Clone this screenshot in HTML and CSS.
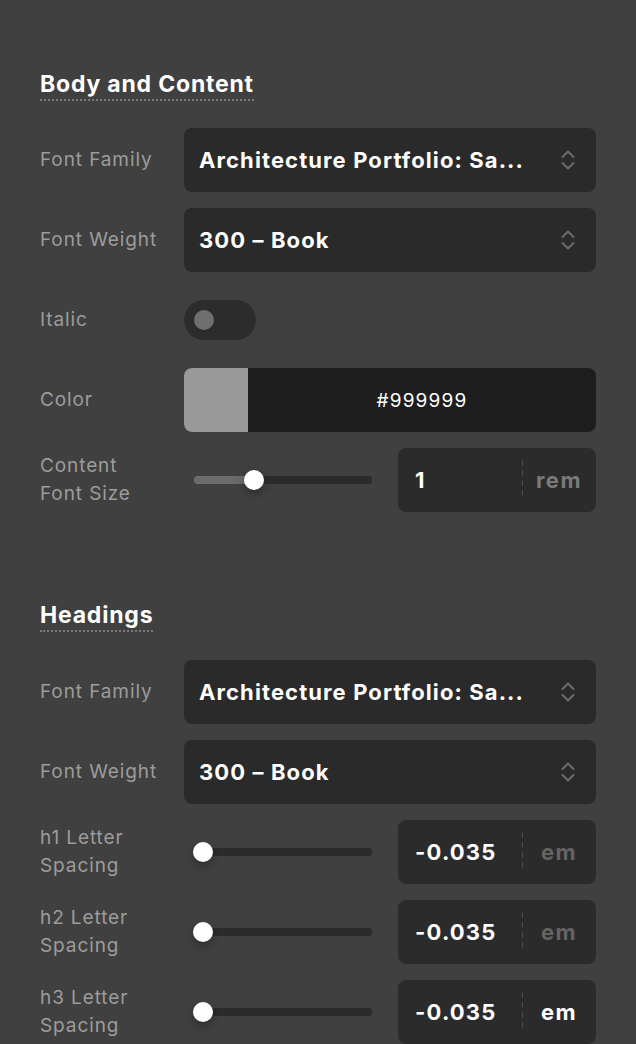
FILE: index.html
```html
<!DOCTYPE html>
<html>
<head>
<meta charset="utf-8">
<link rel="stylesheet" href="styles.css">
</head>
<body>
<div class="panel">
  <section class="section">
    <h2 class="section-title"><span>Body and Content</span></h2>
    <div class="rows">
      <div class="row">
        <div class="label">Font Family</div>
        <div class="select"><span class="select-text">Architecture Portfolio: Sa...</span>
          <svg class="chev" viewBox="0 0 16 22" width="16" height="22"><path d="M2.5 8 L8 2.5 L13.5 8 M2.5 14 L8 19.5 L13.5 14" fill="none" stroke="#6c6c6c" stroke-width="2" stroke-linecap="round" stroke-linejoin="round"/></svg>
        </div>
      </div>
      <div class="row">
        <div class="label">Font Weight</div>
        <div class="select"><span class="select-text">300 – Book</span>
          <svg class="chev" viewBox="0 0 16 22" width="16" height="22"><path d="M2.5 8 L8 2.5 L13.5 8 M2.5 14 L8 19.5 L13.5 14" fill="none" stroke="#6c6c6c" stroke-width="2" stroke-linecap="round" stroke-linejoin="round"/></svg>
        </div>
      </div>
      <div class="row">
        <div class="label">Italic</div>
        <div class="toggle-wrap"><div class="toggle"><div class="knob"></div></div></div>
      </div>
      <div class="row">
        <div class="label">Color</div>
        <div class="color-field"><div class="swatch"></div><div class="hex">#999999</div></div>
      </div>
      <div class="row">
        <div class="label">Content<br>Font Size</div>
        <div class="slider-field">
          <div class="slider">
            <div class="track"><div class="fill" style="width:60px"></div></div>
            <div class="thumb" style="left:50px"></div>
          </div>
          <div class="num">
            <div class="num-value">1</div>
            <div class="num-unit rem">rem</div>
          </div>
        </div>
      </div>
    </div>
  </section>

  <section class="section second">
    <h2 class="section-title"><span>Headings</span></h2>
    <div class="rows">
      <div class="row">
        <div class="label">Font Family</div>
        <div class="select"><span class="select-text">Architecture Portfolio: Sa...</span>
          <svg class="chev" viewBox="0 0 16 22" width="16" height="22"><path d="M2.5 8 L8 2.5 L13.5 8 M2.5 14 L8 19.5 L13.5 14" fill="none" stroke="#6c6c6c" stroke-width="2" stroke-linecap="round" stroke-linejoin="round"/></svg>
        </div>
      </div>
      <div class="row">
        <div class="label">Font Weight</div>
        <div class="select"><span class="select-text">300 – Book</span>
          <svg class="chev" viewBox="0 0 16 22" width="16" height="22"><path d="M2.5 8 L8 2.5 L13.5 8 M2.5 14 L8 19.5 L13.5 14" fill="none" stroke="#6c6c6c" stroke-width="2" stroke-linecap="round" stroke-linejoin="round"/></svg>
        </div>
      </div>
      <div class="row">
        <div class="label">h1 Letter<br>Spacing</div>
        <div class="slider-field">
          <div class="slider">
            <div class="track"><div class="fill" style="width:0px"></div></div>
            <div class="thumb" style="left:-1px"></div>
          </div>
          <div class="num">
            <div class="num-value">-0.035</div>
            <div class="num-unit em">em</div>
          </div>
        </div>
      </div>
      <div class="row">
        <div class="label">h2 Letter<br>Spacing</div>
        <div class="slider-field">
          <div class="slider">
            <div class="track"><div class="fill" style="width:0px"></div></div>
            <div class="thumb" style="left:-1px"></div>
          </div>
          <div class="num">
            <div class="num-value">-0.035</div>
            <div class="num-unit em">em</div>
          </div>
        </div>
      </div>
      <div class="row">
        <div class="label">h3 Letter<br>Spacing</div>
        <div class="slider-field">
          <div class="slider">
            <div class="track"><div class="fill" style="width:0px"></div></div>
            <div class="thumb" style="left:-1px"></div>
          </div>
          <div class="num">
            <div class="num-value">-0.035</div>
            <div class="num-unit em active">em</div>
          </div>
        </div>
      </div>
    </div>
  </section>
</div>
</body>
</html>
```

FILE: styles.css
```css
html, body {
  margin: 0;
  padding: 0;
  background: #404040;
}
body {
  font-family: Inter, "Noto Sans", "Liberation Sans", sans-serif;
  color: #fff;
  height: 1044px;
  overflow: hidden;
}
.panel {
  padding: 70px 40px 0 40px;
}
.section-title {
  margin: 0 0 27px 0;
  font-size: 23px;
  font-weight: 700;
  line-height: 28px;
  color: #fff;
}
.section-title span {
  display: inline-block;
  padding-bottom: 1px;
  border-bottom: 2px dotted #7a7a7a;
  letter-spacing: 0.8px;
}
.second {
  margin-top: 89px;
}
.second .section-title {
  margin-bottom: 28px;
}
.rows {
  display: flex;
  flex-direction: column;
  gap: 16px;
}
.row {
  display: grid;
  grid-template-columns: 144px 1fr;
  align-items: center;
  height: 64px;
}
.label {
  font-size: 19px;
  line-height: 28px;
  color: #9c9c9c;
  letter-spacing: 0.9px;
}
.select {
  height: 64px;
  background: #2a2a2a;
  border-radius: 8px;
  display: flex;
  align-items: center;
  padding: 0 20px 0 15px;
  box-sizing: border-box;
}
.select-text {
  flex: 1;
  font-size: 22px;
  font-weight: 700;
  letter-spacing: 1.1px;
  white-space: nowrap;
}
.chev {
  display: block;
}
.toggle-wrap {
  display: flex;
  align-items: center;
}
.toggle {
  width: 72px;
  height: 40px;
  border-radius: 20px;
  background: #2c2c2c;
  display: flex;
  align-items: center;
  padding-left: 10px;
  box-sizing: border-box;
}
.knob {
  width: 20px;
  height: 20px;
  border-radius: 50%;
  background: #6f6f6f;
}
.color-field {
  height: 64px;
  display: flex;
  background: #1e1e1e;
  border-radius: 8px;
  overflow: hidden;
}
.swatch {
  width: 64px;
  background: #999999;
}
.hex {
  flex: 1;
  display: flex;
  align-items: center;
  justify-content: center;
  font-size: 19px;
  letter-spacing: 1.2px;
}
.slider-field {
  display: flex;
  align-items: center;
  height: 64px;
}
.slider {
  position: relative;
  flex: 1;
  height: 20px;
  margin: 0 26px 0 10px;
}
.track {
  position: absolute;
  left: 0;
  right: 0;
  top: 6px;
  height: 8px;
  border-radius: 3px;
  background: #2b2b2b;
  overflow: hidden;
}
.fill {
  height: 100%;
  background: #6b6b6b;
}
.thumb {
  position: absolute;
  top: 0;
  width: 20px;
  height: 20px;
  border-radius: 50%;
  background: #fff;
  box-shadow: 0 4px 10px rgba(0,0,0,0.3);
}
.num {
  width: 198px;
  height: 64px;
  background: #2b2b2b;
  border-radius: 8px;
  display: flex;
  align-items: center;
}
.num-value {
  width: 124px;
  box-sizing: border-box;
  padding-left: 17px;
  font-size: 22px;
  font-weight: 700;
  letter-spacing: 1.2px;
}
.num-unit {
  flex: 1;
  height: 42px;
  display: flex;
  align-items: center;
  justify-content: center;
  font-size: 22px;
  font-weight: 700;
  letter-spacing: 1.5px;
  background: repeating-linear-gradient(to bottom, #4c4c4c 0 6px, transparent 6px 10px) left center / 1px 40px no-repeat;
}
.num-unit.rem { color: #7a7a7a; }
.num-unit.em { color: #646464; }
.num-unit.em.active { color: #fff; }
```
